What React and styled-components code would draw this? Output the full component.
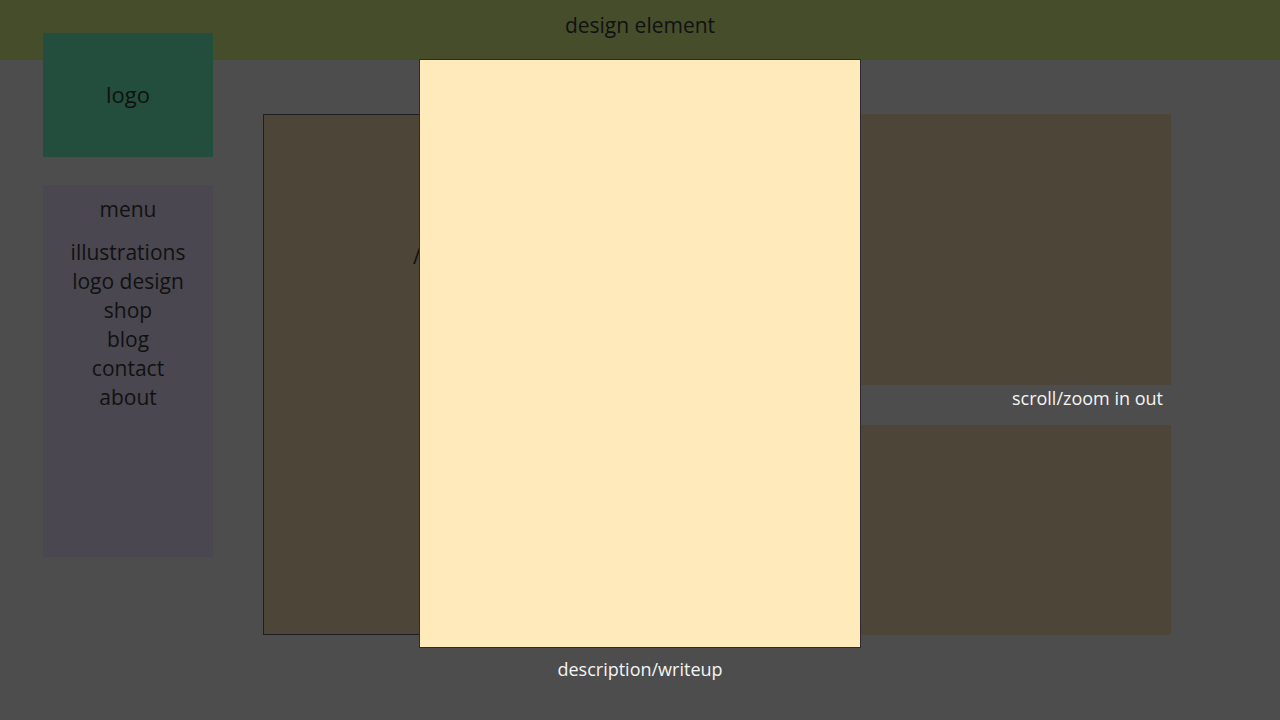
import React from 'react';
import styled, { createGlobalStyle } from 'styled-components';

const GlobalStyle = createGlobalStyle`
  html, body {
    margin: 0;
    padding: 0;
    background: #4d4d4d;
  }
  body {
    font-family: 'Open Sans', 'Liberation Sans', sans-serif;
  }
`;

const App = () => {
  const menuItems = ['illustrations', 'logo design', 'shop', 'blog', 'contact', 'about'];

  return (
    <>
      <GlobalStyle />
      <StPage>
        <StHeader>design element</StHeader>
        <StBody>
          <StSidebar>
            <StLogo>logo</StLogo>
            <StMenu>
              <StMenuTitle>menu</StMenuTitle>
              <StMenuList>
                {menuItems.map(item => (
                  <StMenuItem key={item}>{item}</StMenuItem>
                ))}
              </StMenuList>
            </StMenu>
          </StSidebar>
          <StContent>
            <StMainPanel>
              <StPanelLabel>/main view</StPanelLabel>
            </StMainPanel>
            <StSideColumn>
              <StPanel height={271} />
              <StScrollHint>scroll/zoom in out</StScrollHint>
              <StPanel height={210} />
            </StSideColumn>
          </StContent>
        </StBody>
        <StViewer>
          <StSheet />
          <StDescription>description/writeup</StDescription>
        </StViewer>
      </StPage>
    </>
  );
};

const StPage = styled.div`
  position: relative;
  width: 1280px;
  height: 720px;
  overflow: hidden;
  background: #4d4d4d;
`;

const StHeader = styled.header`
  height: 60px;
  background: #464d2b;
  display: flex;
  justify-content: center;
  padding-top: 10px;
  box-sizing: border-box;
  font-size: 21px;
  line-height: 30px;
  color: #111;
`;

const StBody = styled.div`
  display: flex;
  align-items: flex-start;
`;

const StSidebar = styled.aside`
  width: 170px;
  margin-left: 43px;
  margin-top: -27px;
  display: flex;
  flex-direction: column;
  gap: 28px;
`;

const StLogo = styled.div`
  height: 124px;
  background: #234d3c;
  display: flex;
  align-items: center;
  justify-content: center;
  font-size: 22px;
  color: #111;
  padding-bottom: 2px;
  box-sizing: border-box;
`;

const StMenu = styled.nav`
  height: 372px;
  background: #4a4750;
  padding-top: 10px;
  box-sizing: border-box;
  display: flex;
  flex-direction: column;
  align-items: center;
  color: #111;
  font-size: 21px;
  line-height: 29px;
`;

const StMenuTitle = styled.div``;

const StMenuList = styled.ul`
  list-style: none;
  margin: 14px 0 0;
  padding: 0;
  text-align: center;
`;

const StMenuItem = styled.li``;

const StContent = styled.main`
  margin-left: 50px;
  margin-top: 54px;
  width: 908px;
  display: flex;
  justify-content: space-between;
`;

const StMainPanel = styled.div`
  width: 170px;
  height: 521px;
  background: #4c4538;
  border: 1px solid #1f1d22;
  box-sizing: border-box;
  padding: 129px 0 0 149px;
`;

const StPanelLabel = styled.span`
  display: block;
  font-size: 21px;
  line-height: 24px;
  color: #111;
  white-space: nowrap;
`;

const StSideColumn = styled.div`
  width: 311px;
  display: flex;
  flex-direction: column;
`;

const StPanel = styled.div`
  height: ${({ height }) => height}px;
  background: #4c4538;
`;

const StScrollHint = styled.div`
  height: 40px;
  display: flex;
  align-items: center;
  justify-content: flex-end;
  padding-right: 8px;
  padding-bottom: 15px;
  box-sizing: border-box;
  color: #f4f4f4;
  font-size: 18px;
`;

const StViewer = styled.div`
  position: absolute;
  left: 419px;
  top: 59px;
  width: 442px;
  display: flex;
  flex-direction: column;
  align-items: center;
`;

const StSheet = styled.div`
  width: 100%;
  height: 589px;
  background: #feeabb;
  border: 1px solid #2b2933;
  box-sizing: border-box;
`;

const StDescription = styled.div`
  margin-top: 9px;
  color: #f4f4f4;
  font-size: 18px;
  line-height: 24px;
`;

export default App;
